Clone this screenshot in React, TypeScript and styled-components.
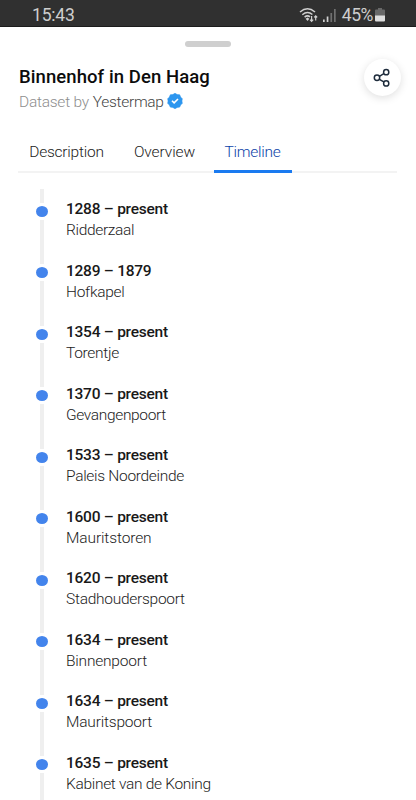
import React from "react";
import styled, { createGlobalStyle } from "styled-components";

const Global = createGlobalStyle`
  * { box-sizing: border-box; }
  body { margin: 0; background: #fff; overflow: hidden; font-family: Roboto, "Open Sans", sans-serif; }
`;
const Screen = styled.main`
  width: 416px; height: 800px; overflow: hidden; background: #fff;
  display: flex; flex-direction: column;
`;
const StatusBar = styled.div`
  height: 27px; flex: none; background: #303030; color: #cecece;
  border-bottom: 1px solid #1c1c1c;
  display: flex; justify-content: space-between; padding: 4px 31px 0 32px;
  font-size: 17.5px; line-height: 22px;
`;
const Clock = styled.span`letter-spacing: -0.2px;`;
const StatusIcons = styled.div`
  display: flex; align-items: flex-start;
  svg { display: block; }
`;
const IconSlot = styled.span<{ $top: number; $gap?: number }>`
  padding-top: ${p => p.$top}px; margin-right: ${p => p.$gap ?? 0}px;
`;
const Battery = styled.span`letter-spacing: -0.4px; margin: 0 2px 0 6px;`;
const Handle = styled.div`
  width: 46px; height: 6px; border-radius: 3px; background: #cfcfcf;
  margin: 14px 0 0 185px; flex: none;
`;
const Header = styled.header`
  display: flex; justify-content: space-between; padding: 11px 15px 0 19px; height: 84px; flex: none;
`;
const Heading = styled.div`padding-top: 6px;`;
const Title = styled.h1`
  margin: 0; font-size: 18.5px; line-height: 26px; font-weight: 500; letter-spacing: 0.08px; color: #0c0c0c; white-space: nowrap;
`;
const Byline = styled.div`
  display: flex; align-items: center; font-size: 15.5px; line-height: 25px; font-weight: 300;
  letter-spacing: -0.25px; color: #8e8e8e; white-space: nowrap;
  svg { margin: -3px 0 0 3px; }
`;
const Author = styled.span`color: #444; margin-left: 4px; letter-spacing: -0.3px;`;
const ShareButton = styled.button`
  width: 37px; height: 37px; border: 0; border-radius: 50%; padding: 0 2px 0 0; background: #fff;
  box-shadow: 0 2px 8px rgba(0, 0, 0, 0.13);
  display: grid; place-items: center; margin-top: 1px;
`;
const Tabs = styled.nav`
  display: flex; height: 42px; margin: 0 19px 0 18px; flex: none; gap: 8px;
  box-shadow: inset 0 -2px #f3f3f3;
`;
const Tab = styled.button<{ $active?: boolean; $width: number; $track: number }>`
  width: ${p => p.$width}px; border: 0; padding: 2px 1px 0 0; background: none; font: 300 15.5px/24px Roboto, sans-serif;
  letter-spacing: ${p => p.$track}px; white-space: nowrap;
  color: ${p => (p.$active ? "#0c42a8" : "#222")};
  border-bottom: 3px solid ${p => (p.$active ? "#1a7af0" : "transparent")};
`;
const Timeline = styled.ol`
  list-style: none; margin: 16px 0 0; padding: 0 0 0 34px;
`;
const Item = styled.li`display: flex; height: 61.5px;`;
const Rail = styled.div`
  width: 16px; display: flex; flex-direction: column; align-items: center; margin-right: 16px;
`;
const Line = styled.div<{ $grow?: boolean }>`
  width: 4px; height: ${p => (p.$grow ? "auto" : "13.6px")}; flex: ${p => (p.$grow ? "1" : "none")}; background: #efefef;
`;
const Dot = styled.div`
  width: 12px; height: 11px; border-radius: 50%; background: #4384ec; margin: 3px 0; flex: none;
`;
const Entry = styled.div`padding-top: 9.4px; white-space: nowrap; font-size: 15.5px; line-height: 22px;`;
const Period = styled.div`
  font-weight: 500; color: #191919; height: 21px; letter-spacing: -0.25px;
`;
const Place = styled.div<{ $track: number }>`
  font-weight: 300; color: #222; letter-spacing: ${p => p.$track}px;
`;

const events: [string, string, number][] = [
  ["1288 – present", "Ridderzaal", -0.33],
  ["1289 – 1879", "Hofkapel", -0.3],
  ["1354 – present", "Torentje", -0.3],
  ["1370 – present", "Gevangenpoort", -0.34],
  ["1533 – present", "Paleis Noordeinde", -0.3],
  ["1600 – present", "Mauritstoren", -0.12],
  ["1620 – present", "Stadhouderspoort", -0.27],
  ["1634 – present", "Binnenpoort", -0.2],
  ["1634 – present", "Mauritspoort", -0.2],
  ["1635 – present", "Kabinet van de Koning", -0.31],
];

const WifiIcon = () => (
  <svg width="20" height="17" viewBox="0 0 20 17" fill="none" stroke="#d0d0d0" strokeWidth="1.5">
    <path d="M1 5Q8.500-1.500 16 5M3.300 7.700Q8.500 3.300 13.400 7.500M5.600 10.100Q8.500 7.700 11 9.900" />
    <path d="M6.600 11.700l2 2.200 1.700-2.200-1.700-1.200z" fill="#d0d0d0" stroke="none" />
    <path d="M12.600 9v5M11 12.600l1.600 1.700 1.600-1.700M16.700 13.500V9M15.200 10.400l1.500-1.600 1.500 1.600" strokeWidth="1.200" />
  </svg>
);
const SignalIcon = () => (
  <svg width="13" height="14" viewBox="0 0 13 14">
    <path d="M0 10.500h1.700V13H0zM3.700 7.500h1.700V13H3.700z" fill="#d0d0d0" />
    <path d="M7.400 4h1.700v9H7.400zM11 0h1.700v13H11z" fill="#707070" />
  </svg>
);
const BatteryIcon = () => (
  <svg width="10" height="14" viewBox="0 0 10 14">
    <path d="M3 0h4v1.500h2q1 0 1 1V8H0V2.500q0-1 1-1h2z" fill="#686868" />
    <path d="M0 7.500h10V12.500q0 1-1 1H1q-1 0-1-1z" fill="#dedede" />
  </svg>
);
const VerifiedIcon = () => (
  <svg width="16" height="16" viewBox="0 0 16 16">
    <path d="M8 .3l2.200 1.300 2.500.2.900 2.300 1.700 1.700L14.900 8l.4 2.300-1.700 1.700-.9 2.100-2.500.3L8 15.700l-2.200-1.300-2.500-.3-.9-2.100-1.700-1.700L1.100 8 .7 5.800l1.700-1.700.9-2.300 2.500-.2z" fill="#2c96ef" stroke="#2c96ef" strokeWidth=".6" strokeLinejoin="round" />
    <path d="M5 7.800l2.100 2.100L11 6" fill="none" stroke="#fff" strokeWidth="1.600" />
  </svg>
);
const ShareIcon = () => (
  <svg width="18" height="20" viewBox="0 0 18 20" fill="none" stroke="#1e2c3c" strokeWidth="1.500">
    <circle cx="4" cy="9.800" r="2.700" /><circle cx="13.200" cy="4.200" r="2.600" /><circle cx="13.200" cy="15.400" r="2.600" />
    <path d="M6.400 8.300l4.400-2.700M6.400 11.300l4.400 2.600" />
  </svg>
);

export default function App() {
  return (
    <Screen>
      <Global />
      <StatusBar>
        <Clock>15:43</Clock>
        <StatusIcons>
          <IconSlot $top={3} $gap={4}><WifiIcon /></IconSlot>
          <IconSlot $top={5}><SignalIcon /></IconSlot>
          <Battery>45%</Battery>
          <IconSlot $top={4}><BatteryIcon /></IconSlot>
        </StatusIcons>
      </StatusBar>
      <Handle />
      <Header>
        <Heading>
          <Title>Binnenhof in Den Haag</Title>
          <Byline>Dataset by <Author>Yestermap</Author><VerifiedIcon /></Byline>
        </Heading>
        <ShareButton aria-label="Share"><ShareIcon /></ShareButton>
      </Header>
      <Tabs>
        <Tab $width={98} $track={-0.22}>Description</Tab>
        <Tab $width={82} $track={-0.1}>Overview</Tab>
        <Tab $width={78} $track={-0.28} $active>Timeline</Tab>
      </Tabs>
      <Timeline>
        {events.map(([period, place, track]) => (
          <Item key={place}>
            <Rail><Line /><Dot /><Line $grow /></Rail>
            <Entry>
              <Period>{period}</Period>
              <Place $track={track}>{place}</Place>
            </Entry>
          </Item>
        ))}
      </Timeline>
    </Screen>
  );
}
